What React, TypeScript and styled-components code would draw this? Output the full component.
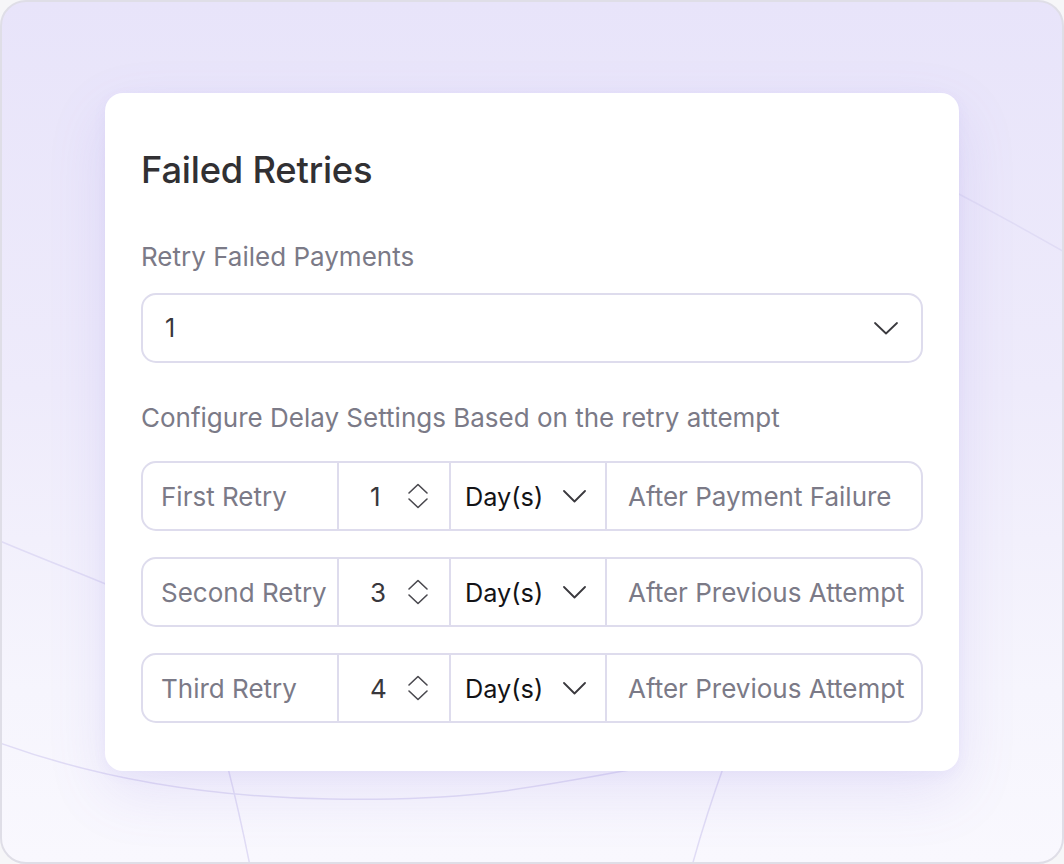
import React from "react";
import styled, { createGlobalStyle } from "styled-components";

const Global = createGlobalStyle`
  html, body { margin: 0; padding: 0; background: #f6f6f8; }
  body { font-family: Inter, "Noto Sans", "Liberation Sans", sans-serif; -webkit-font-smoothing: antialiased; }
  * { box-sizing: border-box; }
`;

const Frame = styled.div`
  position: relative;
  width: 1064px;
  height: 864px;
  border: 2px solid #dfdee7;
  border-radius: 26px;
  overflow: hidden;
  background: linear-gradient(180deg, #e8e4fa 0%, #eeebfb 45%, #f6f5fd 80%, #f9f8fe 100%);
  padding: 91px 0 0 103px;
`;

const Deco = styled.svg`
  position: absolute;
  left: -2px;
  top: -2px;
  width: 1064px;
  height: 864px;
  pointer-events: none;
`;

const Card = styled.section`
  position: relative;
  width: 854px;
  height: 678px;
  background: #ffffff;
  border-radius: 18px;
  box-shadow: 0 22px 60px rgba(120, 100, 220, 0.13), 0 4px 14px rgba(120, 100, 220, 0.06);
  padding: 55px 36px 0 36px;
  display: flex;
  flex-direction: column;
`;

const Title = styled.h1`
  margin: 0;
  font-size: 36.3px;
  line-height: 44px;
  font-weight: 500;
  color: #313033;
  letter-spacing: -0.2px;
`;

const Label = styled.div<{ $top: number }>`
  margin-top: ${(p) => p.$top}px;
  font-size: 26px;
  line-height: 30px;
  font-weight: 400;
  color: #7b7a87;
`;

const Select = styled.div`
  margin-top: 21px;
  height: 70px;
  border: 2px solid #dedced;
  border-radius: 15px;
  display: flex;
  align-items: center;
  justify-content: space-between;
  padding: 0 23px 0 22px;
  font-size: 25px;
  color: #333236;
`;

const Rows = styled.div`
  margin-top: 28px;
  display: flex;
  flex-direction: column;
  gap: 26px;
`;

const Row = styled.div`
  height: 70px;
  border: 2px solid #dedced;
  border-radius: 15px;
  display: grid;
  grid-template-columns: 194px 112px 156px 1fr;
  align-items: stretch;
  overflow: hidden;
`;

const Cell = styled.div<{ $divider?: boolean; $pl: number; $pr?: number }>`
  display: flex;
  align-items: center;
  justify-content: space-between;
  padding-left: ${(p) => p.$pl}px;
  padding-right: ${(p) => p.$pr ?? 0}px;
  border-left: ${(p) => (p.$divider ? "2px solid #dedced" : "none")};
  font-size: 26px;
  white-space: nowrap;
`;

const Muted = styled.span`
  color: #7b7a87;
`;

const Strong = styled.span<{ $dark?: boolean }>`
  color: ${(p) => (p.$dark ? "#131316" : "#38373c")};
  font-size: ${(p) => (p.$dark ? "25.3px" : "inherit")};
`;

const Chevron = ({ w = 24, h = 13 }: { w?: number; h?: number }) => (
  <svg width={w} height={h} viewBox={`0 0 ${w} ${h}`} fill="none">
    <path
      d={`M1 1 L${w / 2} ${h - 1.5} L${w - 1} 1`}
      stroke="#3a393e"
      strokeWidth="1.8"
      strokeLinecap="round"
      strokeLinejoin="round"
    />
  </svg>
);

const Spinner = () => (
  <svg width="22" height="26" viewBox="0 0 22 26" fill="none">
    <path d="M2 10 L11 1.5 L20 10" stroke="#4a494f" strokeWidth="1.6" strokeLinecap="round" strokeLinejoin="round" />
    <path d="M2 16 L11 24.5 L20 16" stroke="#4a494f" strokeWidth="1.6" strokeLinecap="round" strokeLinejoin="round" />
  </svg>
);

const rows = [
  { label: "First Retry", value: 1, after: "After Payment Failure" },
  { label: "Second Retry", value: 3, after: "After Previous Attempt" },
  { label: "Third Retry", value: 4, after: "After Previous Attempt" },
];

export default function App() {
  return (
    <>
      <Global />
      <Frame>
        <Deco viewBox="0 0 1064 864">
          <g stroke="#e0dcf5" strokeWidth="1.5" fill="none">
            <path d="M0 541 C 40 558, 80 573, 120 590 S 220 630, 300 650" />
            <path d="M0 743 C 80 772, 190 797, 330 799 S 520 790, 640 768" />
            <path d="M226 760 Q 240 815, 250 866" />
            <path d="M726 760 Q 706 815, 692 866" />
            <path d="M940 184 Q 1005 218, 1066 253" />
          </g>
        </Deco>
        <Card>
          <Title>Failed Retries</Title>
          <Label $top={50}>Retry Failed Payments</Label>
          <Select>
            <Strong>1</Strong>
            <Chevron />
          </Select>
          <Label $top={40}>Configure Delay Settings Based on the retry attempt</Label>
          <Rows>
            {rows.map((r) => (
              <Row key={r.label}>
                <Cell $pl={18}>
                  <Muted>{r.label}</Muted>
                </Cell>
                <Cell $divider $pl={31} $pr={20}>
                  <Strong>{r.value}</Strong>
                  <Spinner />
                </Cell>
                <Cell $divider $pl={14} $pr={19}>
                  <Strong $dark>Day(s)</Strong>
                  <Chevron w={23} h={13} />
                </Cell>
                <Cell $divider $pl={21}>
                  <Muted>{r.after}</Muted>
                </Cell>
              </Row>
            ))}
          </Rows>
        </Card>
      </Frame>
    </>
  );
}
